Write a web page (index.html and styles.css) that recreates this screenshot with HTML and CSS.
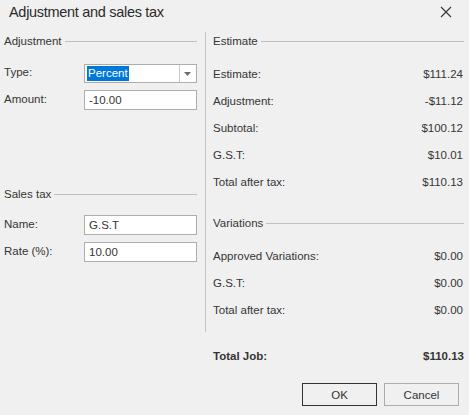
FILE: index.html
```html
<!DOCTYPE html>
<html lang="en">
<head>
  <meta charset="UTF-8">
  <title>Adjustment and sales tax</title>
  <link rel="stylesheet" href="styles.css">
</head>
<body>
  <div class="dialog">
    <div class="titlebar">
      <span class="title">Adjustment and sales tax</span>
      <svg class="close" width="12" height="12" viewBox="0 0 12 12">
        <path d="M1 1 L11 11 M11 1 L1 11" stroke="#333" stroke-width="1.1" fill="none"/>
      </svg>
    </div>

    <div class="main">
      <div class="left">
        <div class="group-head">Adjustment<span class="rule"></span></div>
        <div class="field first">
          <label>Type:</label>
          <div class="combo">
            <span class="combo-text"><span class="sel">Percent</span></span>
            <span class="combo-btn">
              <svg width="8" height="4" viewBox="0 0 8 4"><path d="M0 0 H7 L3.5 4 Z" fill="#6b6b6b"/></svg>
            </span>
          </div>
        </div>
        <div class="field">
          <label>Amount:</label>
          <div class="input">-10.00</div>
        </div>

        <div class="group-head sales">Sales tax<span class="rule"></span></div>
        <div class="field second">
          <label>Name:</label>
          <div class="input">G.S.T</div>
        </div>
        <div class="field">
          <label>Rate (%):</label>
          <div class="input">10.00</div>
        </div>
      </div>

      <div class="right">
        <div class="group-head">Estimate<span class="rule"></span></div>
        <div class="rows">
          <div class="row"><span>Estimate:</span><span>$111.24</span></div>
          <div class="row"><span>Adjustment:</span><span>-$11.12</span></div>
          <div class="row"><span>Subtotal:</span><span>$100.12</span></div>
          <div class="row"><span>G.S.T:</span><span>$10.01</span></div>
          <div class="row"><span>Total after tax:</span><span>$110.13</span></div>
        </div>

        <div class="group-head variations">Variations<span class="rule"></span></div>
        <div class="rows var-rows">
          <div class="row"><span>Approved Variations:</span><span>$0.00</span></div>
          <div class="row"><span>G.S.T:</span><span>$0.00</span></div>
          <div class="row"><span>Total after tax:</span><span>$0.00</span></div>
        </div>
      </div>
    </div>

    <div class="total">
      <span>Total Job:</span><span>$110.13</span>
    </div>

    <div class="buttons">
      <button class="btn default">OK</button>
      <button class="btn">Cancel</button>
    </div>
  </div>
</body>
</html>
```

FILE: styles.css
```css
body {
  margin: 0;
  background: #f0f0f0;
  font-family: "Liberation Sans", Arial, sans-serif;
  font-size: 11.5px;
  color: #353535;
}

.dialog {
  width: 469px;
  height: 415px;
  overflow: hidden;
}

.titlebar {
  height: 30px;
  display: flex;
  align-items: center;
  justify-content: space-between;
  padding: 0 17px 0 9px;
  box-sizing: border-box;
}

.title {
  font-size: 14.5px;
  letter-spacing: -0.3px;
  color: #2b2b2b;
  margin-top: -6px;
}

.close {
  margin-top: -6px;
}

.main {
  display: flex;
  margin-top: 2px;
  height: 300px;
}

.left {
  width: 193px;
  padding-left: 4px;
}

.right {
  width: 251px;
  margin-left: 8px;
  border-left: 1px solid #c4c4c4;
  padding-left: 7px;
}

.group-head {
  display: flex;
  align-items: center;
  height: 18px;
  white-space: nowrap;
}

.rule {
  flex: 1;
  height: 1px;
  background: #c0c0c0;
  margin-left: 3px;
}

.field {
  display: flex;
  align-items: center;
  margin-top: 7px;
}

.field.first {
  margin-top: 14px;
}

.field.second {
  margin-top: 12px;
}

.field label {
  width: 80px;
  margin-top: -3px;
}

.input,
.combo {
  width: 113px;
  height: 20px;
  box-sizing: border-box;
  border: 1px solid #adadad;
  background: #fff;
  display: flex;
  align-items: center;
  padding-left: 4px;
}

.combo {
  padding-left: 2px;
  height: 19px;
}

.combo-text {
  flex: 1;
}

.sel {
  display: inline-block;
  background: #0078d7;
  color: #fff;
  height: 15px;
  line-height: 15px;
  padding: 0 1px;
}

.combo-btn {
  width: 16px;
  height: 17px;
  border-left: 1px solid #c8c8c8;
  display: flex;
  align-items: center;
  justify-content: center;
}

.group-head.sales {
  margin-top: 75px;
}

.rows {
  margin-top: 11px;
}

.row {
  display: flex;
  justify-content: space-between;
  height: 27px;
  line-height: 27px;
  padding-right: 1px;
}

.group-head.variations {
  margin-top: 18px;
}

.var-rows {
  margin-top: 11px;
}

.total {
  display: flex;
  justify-content: space-between;
  font-weight: bold;
  margin: 15px 5px 0 213px;
  height: 18px;
  line-height: 18px;
}

.buttons {
  display: flex;
  justify-content: flex-end;
  gap: 7px;
  margin: 18px 10px 0 0;
}

.btn {
  width: 75px;
  height: 23px;
  border: 1px solid #adadad;
  background: #f0f0f0;
  font-family: inherit;
  font-size: 11.5px;
  color: #333;
  padding: 0;
}

.btn.default {
  border: 1px solid #333;
}
```
